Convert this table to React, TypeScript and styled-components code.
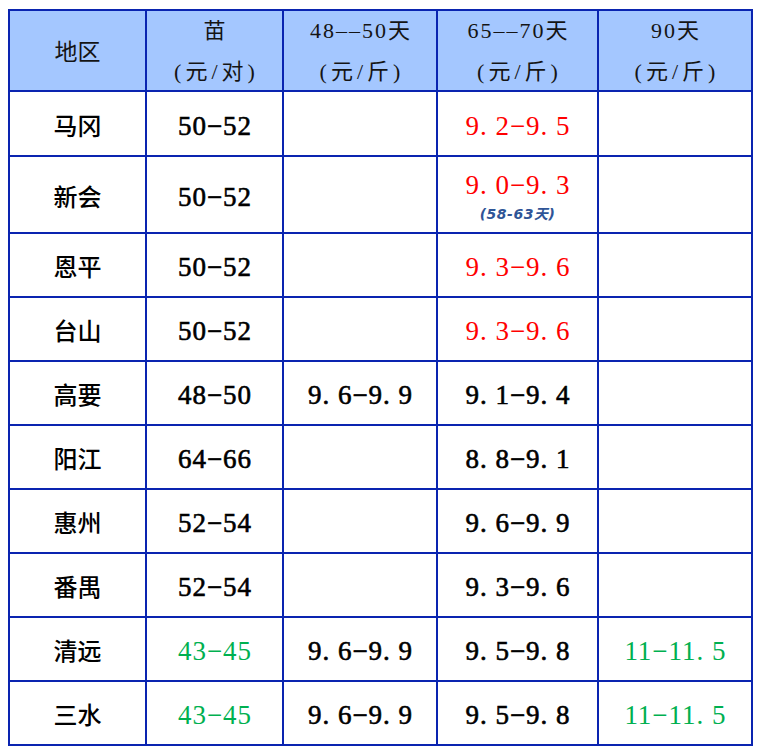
import React from "react";
import styled, { createGlobalStyle } from "styled-components";

const Global = createGlobalStyle`
  html, body { margin: 0; padding: 0; background: #ffffff; }
`;

const Page = styled.div`
  padding: 9px 0 0 8px;
`;

const Table = styled.div`
  display: inline-grid;
  grid-template-columns: 135px 135px 152px 159px 152px;
  grid-template-rows: 79px 63px 75px repeat(8, 62px);
  gap: 2px;
  padding: 2px;
  background: #0a24b0;
`;

const HeadCell = styled.div`
  background: #a4c7ff;
  color: #141414;
  display: flex;
  flex-direction: column;
  align-items: center;
  justify-content: center;
  font-family: "Liberation Serif", "Noto Sans CJK SC", serif;
  font-size: 22px;
  line-height: 41px;
  white-space: pre;
`;

const HeadTop = styled.span`
  letter-spacing: 2px;
  margin-right: -2px;
`;

const HeadUnit = styled.span`
  letter-spacing: 4px;
  margin-right: -4px;
`;

const HeadLabel = styled.span`
  font-family: "Noto Sans CJK SC", sans-serif;
  font-size: 23px;
`;

type Tone = "black" | "red" | "green";

const toneColor: Record<Tone, string> = {
  black: "#000000",
  red: "#ff0000",
  green: "#00b050",
};

const Cell = styled.div`
  background: #ffffff;
  display: flex;
  flex-direction: column;
  align-items: center;
  justify-content: center;
`;

const Region = styled.span`
  font-family: "Noto Sans CJK SC", sans-serif;
  font-size: 24px;
  font-weight: 500;
  color: #000;
  line-height: 30px;
  margin-top: 2px;
`;

const Num = styled.span<{ $tone: Tone }>`
  font-family: "Liberation Serif", serif;
  font-size: 27px;
  letter-spacing: 1px;
  margin-right: -1px;
  line-height: 30px;
  margin-top: 4px;
  white-space: pre;
  color: ${(p) => toneColor[p.$tone]};
  -webkit-text-stroke: ${(p) => (p.$tone === "black" ? "0.6px #000" : "0")};
`;

const Note = styled.span`
  font-family: "DejaVu Sans", "Noto Sans CJK SC", sans-serif;
  font-style: italic;
  font-weight: 600;
  font-size: 14px;
  letter-spacing: 0.5px;
  color: #2f5597;
  line-height: 18px;
  margin-top: 5px;
`;

type Val = { t: string; tone?: Tone; note?: string } | null;

const rows: { name: string; cells: Val[] }[] = [
  { name: "马冈", cells: [{ t: "50−52" }, null, { t: "9. 2−9. 5", tone: "red" }, null] },
  {
    name: "新会",
    cells: [{ t: "50−52" }, null, { t: "9. 0−9. 3", tone: "red", note: "(58-63天)" }, null],
  },
  { name: "恩平", cells: [{ t: "50−52" }, null, { t: "9. 3−9. 6", tone: "red" }, null] },
  { name: "台山", cells: [{ t: "50−52" }, null, { t: "9. 3−9. 6", tone: "red" }, null] },
  { name: "高要", cells: [{ t: "48−50" }, { t: "9. 6−9. 9" }, { t: "9. 1−9. 4" }, null] },
  { name: "阳江", cells: [{ t: "64−66" }, null, { t: "8. 8−9. 1" }, null] },
  { name: "惠州", cells: [{ t: "52−54" }, null, { t: "9. 6−9. 9" }, null] },
  { name: "番禺", cells: [{ t: "52−54" }, null, { t: "9. 3−9. 6" }, null] },
  {
    name: "清远",
    cells: [
      { t: "43−45", tone: "green" },
      { t: "9. 6−9. 9" },
      { t: "9. 5−9. 8" },
      { t: "11−11. 5", tone: "green" },
    ],
  },
  {
    name: "三水",
    cells: [
      { t: "43−45", tone: "green" },
      { t: "9. 6−9. 9" },
      { t: "9. 5−9. 8" },
      { t: "11−11. 5", tone: "green" },
    ],
  },
];

const heads: { top: string; unit: string }[] = [
  { top: "苗", unit: "(元/对)" },
  { top: "48––50天", unit: "(元/斤)" },
  { top: "65––70天", unit: "(元/斤)" },
  { top: "90天", unit: "(元/斤)" },
];

export default function App() {
  return (
    <>
      <Global />
      <Page>
        <Table>
          <HeadCell>
            <HeadLabel>地区</HeadLabel>
          </HeadCell>
          {heads.map((h, i) => (
            <HeadCell key={i}>
              <HeadTop>{h.top}</HeadTop>
              <HeadUnit>{h.unit}</HeadUnit>
            </HeadCell>
          ))}
          {rows.map((r) => (
            <React.Fragment key={r.name}>
              <Cell>
                <Region>{r.name}</Region>
              </Cell>
              {r.cells.map((c, j) => (
                <Cell key={j}>
                  {c && <Num $tone={c.tone ?? "black"}>{c.t}</Num>}
                  {c && c.note && <Note>{c.note}</Note>}
                </Cell>
              ))}
            </React.Fragment>
          ))}
        </Table>
      </Page>
    </>
  );
}
